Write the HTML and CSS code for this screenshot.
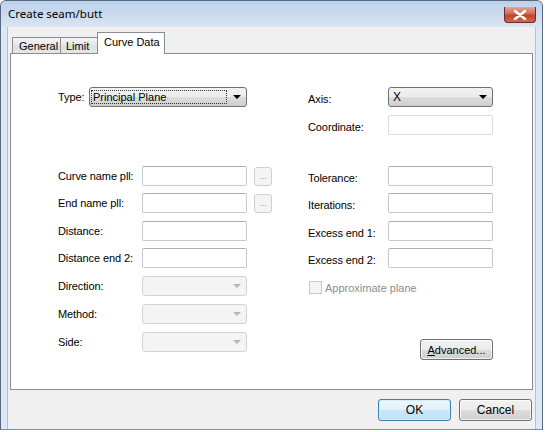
FILE: index.html
```html
<!DOCTYPE html>
<html>
<head>
<meta charset="utf-8">
<link rel="stylesheet" href="styles.css">
</head>
<body>
<div class="window">
  <div class="titlebar">
    <span class="title">Create seam/butt</span>
    <div class="close"><svg width="14" height="10" viewBox="0 0 14 10"><path d="M2 1 L12 9 M12 1 L2 9" stroke="#fff" stroke-width="2.6" stroke-linecap="round"/></svg></div>
  </div>
  <div class="client">
    <div class="tabs">
      <div class="tab t-general">General</div>
      <div class="tab t-limit">Limit</div>
      <div class="tab active">Curve Data</div>
    </div>
    <div class="panel">
      <div class="col left">
        <div class="row r-type">
          <span class="lbl w-type">Type:</span>
          <div class="combo wide"><span class="focus">Principal Plane</span><span class="arrow"></span></div>
        </div>
        <div class="row r-first">
          <span class="lbl w-left">Curve name pll:</span>
          <div class="input"></div>
          <div class="dots">...</div>
        </div>
        <div class="row g7">
          <span class="lbl w-left">End name pll:</span>
          <div class="input"></div>
          <div class="dots">...</div>
        </div>
        <div class="row g8">
          <span class="lbl w-left">Distance:</span>
          <div class="input"></div>
        </div>
        <div class="row g7">
          <span class="lbl w-left">Distance end 2:</span>
          <div class="input"></div>
        </div>
        <div class="row g8">
          <span class="lbl w-left">Direction:</span>
          <div class="combo disabled"><span class="arrow"></span></div>
        </div>
        <div class="row g8">
          <span class="lbl w-left">Method:</span>
          <div class="combo disabled"><span class="arrow"></span></div>
        </div>
        <div class="row g8">
          <span class="lbl w-left">Side:</span>
          <div class="combo disabled"><span class="arrow"></span></div>
        </div>
      </div>
      <div class="col right">
        <div class="row r-type">
          <span class="lbl w-right">Axis:</span>
          <div class="combo"><span class="val">X</span><span class="arrow"></span></div>
        </div>
        <div class="row g8">
          <span class="lbl w-right">Coordinate:</span>
          <div class="input disabled"></div>
        </div>
        <div class="row r-tol">
          <span class="lbl w-right">Tolerance:</span>
          <div class="input"></div>
        </div>
        <div class="row g7">
          <span class="lbl w-right">Iterations:</span>
          <div class="input"></div>
        </div>
        <div class="row g8">
          <span class="lbl w-right">Excess end 1:</span>
          <div class="input"></div>
        </div>
        <div class="row g7">
          <span class="lbl w-right">Excess end 2:</span>
          <div class="input"></div>
        </div>
        <div class="check-row">
          <span class="checkbox"></span>
          <span class="check-lbl">Approximate plane</span>
        </div>
        <div class="adv-row">
          <div class="btn adv"><u>A</u>dvanced...</div>
        </div>
      </div>
    </div>
    <div class="buttons">
      <div class="btn ok">OK</div>
      <div class="btn cancel">Cancel</div>
    </div>
  </div>
</div>
</body>
</html>
```

FILE: styles.css
```css
html, body {
  margin: 0;
  padding: 0;
  background: #ffffff;
}
body {
  width: 545px;
  height: 432px;
  overflow: hidden;
  font-family: "Liberation Sans", Arial, sans-serif;
  font-size: 11px;
  color: #000;
}
.window {
  width: 541px;
  height: 428px;
  border: 1px solid #56687e;
  border-bottom-color: #3fa3d8;
  border-radius: 6px 6px 0 0;
  background: #dde8f4;
  display: flex;
  flex-direction: column;
}
.titlebar {
  height: 26px;
  display: flex;
  align-items: flex-start;
  justify-content: space-between;
  background: linear-gradient(#bcd2ec, #cddcee 60%, #d9e5f2);
  border-radius: 5px 5px 0 0;
}
.title {
  font-family: "Noto Sans", "DejaVu Sans", sans-serif;
  font-size: 11.5px;
  padding: 5px 0 0 7px;
  color: #000;
}
.close {
  width: 30px;
  height: 15px;
  margin: 6px 6px 0 0;
  border: 1px solid #6e2a24;
  border-top: none;
  border-radius: 0 0 4px 4px;
  background: linear-gradient(#e6a494, #d06a5a 45%, #c2402c 55%, #cf6a50);
  display: flex;
  align-items: center;
  justify-content: center;
}
.client {
  flex: 1;
  margin: 0 6px 0 6px;
  background: #f0f0f0;
  border-left: 1px solid #b4c1d0;
  border-right: 1px solid #b4c1d0;
  display: flex;
  flex-direction: column;
  padding: 5px 3px 0 2px;
}
.tabs {
  display: flex;
  align-items: flex-end;
  height: 21px;
  padding-left: 2px;
  position: relative;
  z-index: 1;
}
.tab {
  height: 16px;
  line-height: 16px;
  border: 1px solid #898c95;
  border-bottom: none;
  background: linear-gradient(#f5f5f5, #e6e6e6 50%, #dedede 51%, #e6e6e6);
  padding: 0 5px;
  margin-right: -1px;
  box-sizing: border-box;
  white-space: nowrap;
}
.t-general { width: 49px; padding-left: 6px; }
.t-limit { width: 38px; padding-left: 5px; }
.tab.active {
  height: 22px;
  line-height: 18px;
  width: 68px;
  background: #ffffff;
  padding: 0 0 0 6px;
  margin-bottom: -1px;
  position: relative;
}
.panel {
  width: 523px;
  height: 337px;
  box-sizing: border-box;
  background: #ffffff;
  border: 1px solid #898c95;
  display: flex;
  padding: 33px 0 0 47px;
}
.col {
  display: flex;
  flex-direction: column;
}
.left { width: 250px; }
.right { width: 185px; }
.row {
  display: flex;
  align-items: center;
  height: 20px;
}
.g7 { margin-top: 7px; }
.g8 { margin-top: 8px; }
.r-first { margin-top: 59px; }
.r-tol { margin-top: 31px; }
.lbl {
  white-space: nowrap;
  letter-spacing: -0.1px;
}
.w-type { width: 31px; }
.w-left { width: 84px; }
.w-right { width: 80px; padding-top: 4px; }
.input {
  width: 105px;
  height: 20px;
  box-sizing: border-box;
  border: 1px solid #c5c8cf;
  border-top-color: #abadb3;
  border-radius: 2px;
  background: #fff;
}
.input.disabled {
  border-color: #dadcdf;
}
.dots {
  width: 18px;
  height: 19px;
  box-sizing: border-box;
  margin-left: 7px;
  border: 1px solid #cfcfcf;
  border-radius: 3px;
  background: #f4f4f4;
  color: #9a9a9a;
  font-size: 9px;
  line-height: 17px;
  text-align: center;
}
.combo {
  width: 105px;
  height: 20px;
  box-sizing: border-box;
  border: 1px solid #707070;
  border-radius: 3px;
  background: linear-gradient(#f2f2f2, #ebebeb 50%, #dddddd 51%, #cfcfcf);
  display: flex;
  align-items: center;
  position: relative;
  padding-left: 3px;
}
.combo.wide { width: 158px; padding-left: 1px; }
.combo .val { font-size: 12px; padding-left: 1px; }
.focus {
  border: 1px dotted #333;
  height: 14px;
  line-height: 13px;
  flex: 0 0 136px;
  padding-left: 1px;
  box-sizing: border-box;
  font-size: 11px;
}
.arrow {
  position: absolute;
  right: 5px;
  top: 7px;
  width: 0;
  height: 0;
  border-left: 4px solid transparent;
  border-right: 4px solid transparent;
  border-top: 4px solid #000;
}
.combo.disabled {
  border-color: #d3d3d3;
  background: #f4f4f4;
}
.combo.disabled .arrow {
  border-top-color: #b5b5b5;
}
.check-row {
  display: flex;
  align-items: center;
  margin-top: 13px;
  height: 13px;
  padding-left: 1px;
}
.checkbox {
  width: 13px;
  height: 13px;
  box-sizing: border-box;
  border: 1px solid #c8c8c8;
  background: #f4f4f4;
}
.check-lbl {
  color: #8d8d8d;
  margin-left: 3px;
  padding-top: 1px;
}
.adv-row {
  display: flex;
  justify-content: flex-end;
  margin-top: 45px;
}
.btn {
  height: 21px;
  box-sizing: border-box;
  border: 1px solid #707070;
  border-radius: 3px;
  background: linear-gradient(#f2f2f2, #ebebeb 50%, #dddddd 51%, #cfcfcf);
  display: flex;
  align-items: center;
  justify-content: center;
  font-size: 11px;
  box-shadow: inset 0 0 0 1px rgba(255,255,255,0.7);
}
.adv { width: 73px; }
.buttons {
  display: flex;
  justify-content: flex-end;
  gap: 8px;
  margin-top: 9px;
  padding-right: 0;
}
.ok, .cancel {
  width: 73px;
  height: 22px;
  font-size: 12px;
}
.ok {
  border-color: #3c7fb1;
  background: linear-gradient(#eef8fd, #e0f1fb 50%, #cbe8f8 51%, #bde1f5);
  box-shadow: inset 0 0 0 1px #d6eefb;
}
```
